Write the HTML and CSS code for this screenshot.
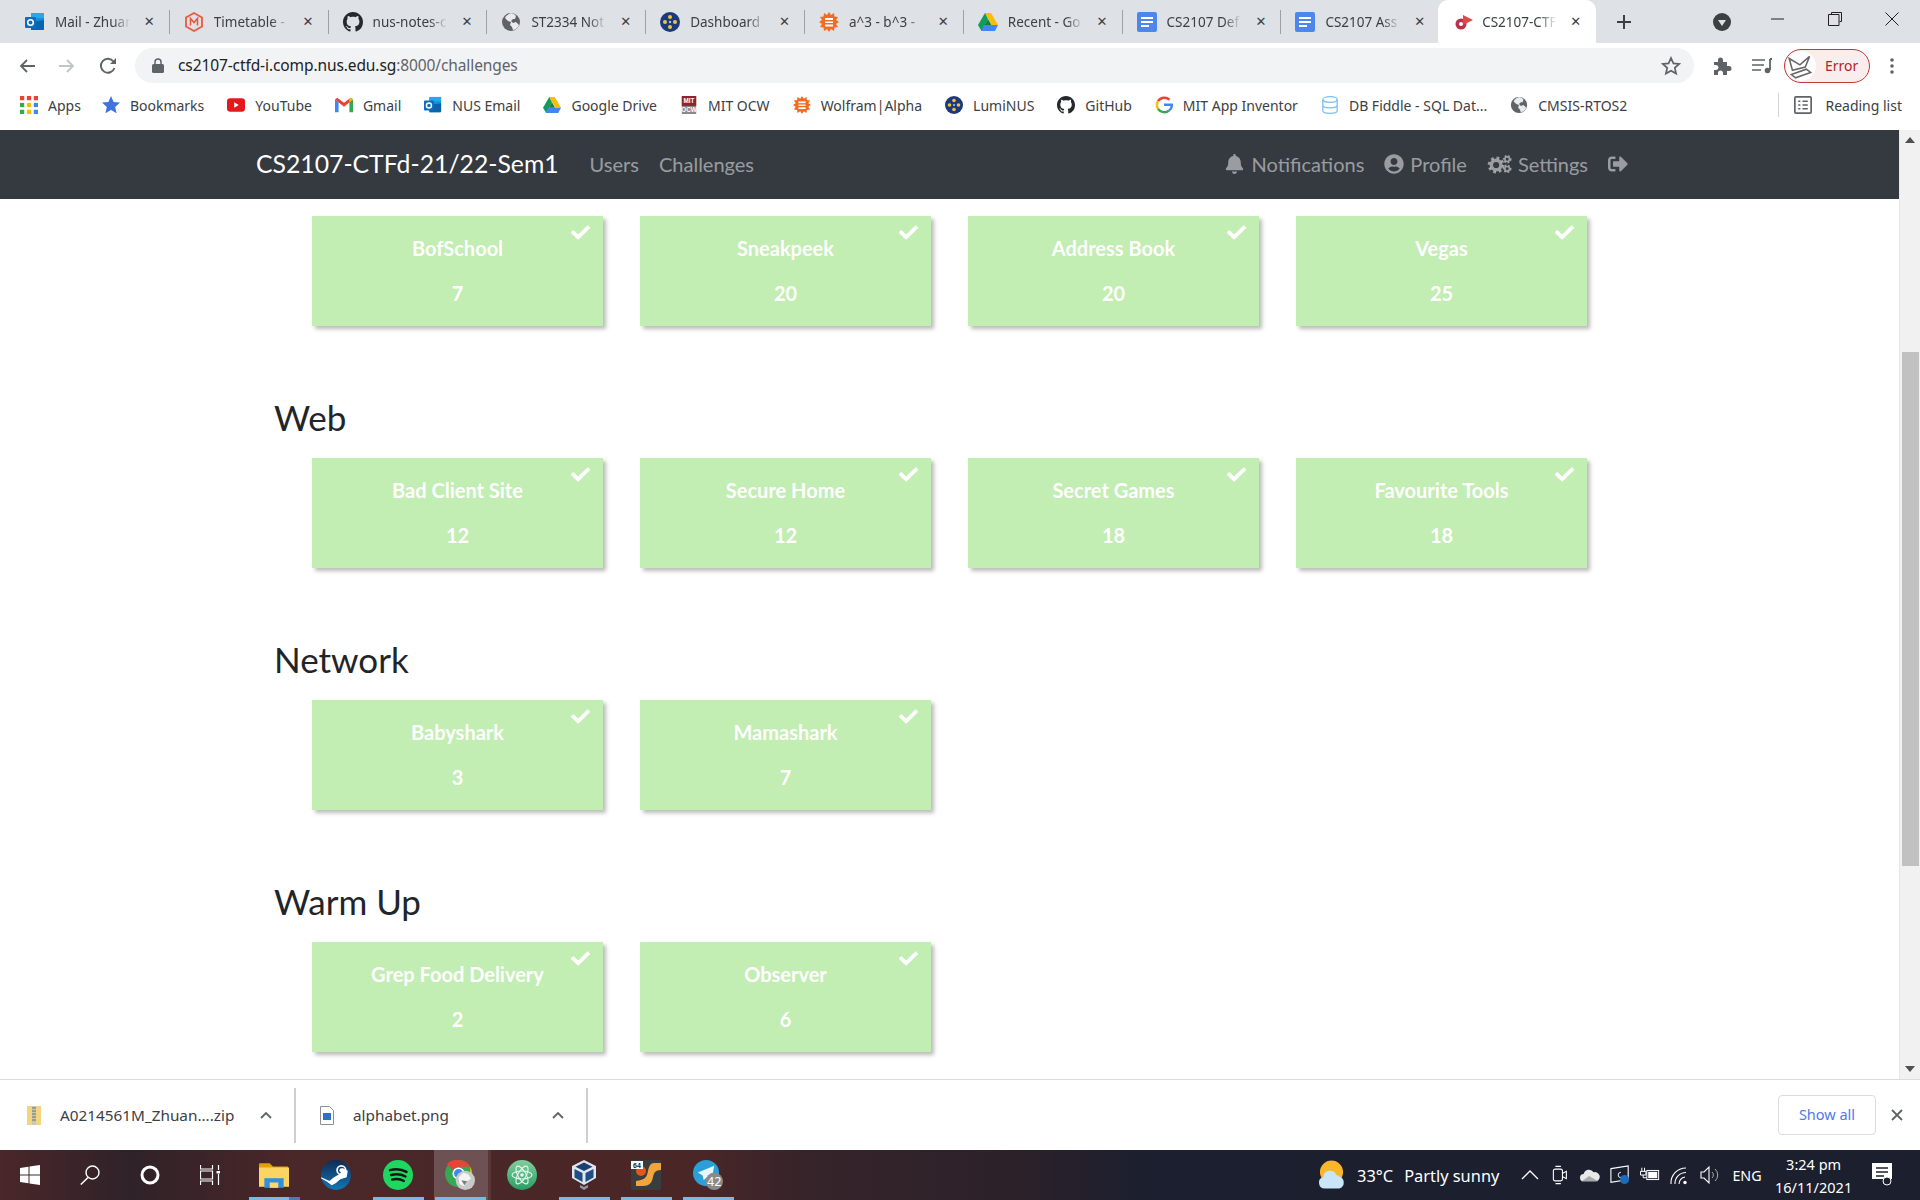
FILE: index.html
```html
<!DOCTYPE html>
<html lang="en">
<head>
    <meta charset="UTF-8">
    <title>CS2107-CTFd-21/22-Sem1</title>
    <link rel="stylesheet" href="styles.css">
</head>
<body>
    <svg class="defs" width="0" height="0">
        <defs>
            <symbol id="i-github" viewBox="0 0 16 16"><path fill="#24292e" d="M8 0C3.58 0 0 3.58 0 8c0 3.54 2.29 6.53 5.47 7.59.4.07.55-.17.55-.38 0-.19-.01-.82-.01-1.49-2.01.37-2.53-.49-2.69-.94-.09-.23-.48-.94-.82-1.13-.28-.15-.68-.52-.01-.53.63-.01 1.08.58 1.23.82.72 1.21 1.87.87 2.33.66.07-.52.28-.87.51-1.07-1.78-.2-3.64-.89-3.64-3.95 0-.87.31-1.59.82-2.15-.08-.2-.36-1.02.08-2.12 0 0 .67-.21 2.2.82.64-.18 1.32-.27 2-.27.68 0 1.36.09 2 .27 1.53-1.04 2.2-.82 2.2-.82.44 1.1.16 1.92.08 2.12.51.56.82 1.27.82 2.15 0 3.07-1.87 3.75-3.65 3.95.29.25.54.73.54 1.48 0 1.07-.01 1.93-.01 2.2 0 .21.15.46.55.38A8.013 8.013 0 0016 8c0-4.42-3.58-8-8-8z"/></symbol>
            <symbol id="i-outlook" viewBox="0 0 20 20"><rect x="6" y="1" width="13" height="17" rx="1" fill="#1490df"/><rect x="6" y="1" width="13" height="5" fill="#28a8ea"/><path d="M6 10l13-2v9a1 1 0 0 1-1 1H6z" fill="#0a64ad"/><rect x="0" y="5" width="11" height="11" rx="1" fill="#0f6cbd"/><circle cx="5.5" cy="10.5" r="2.8" fill="none" stroke="#fff" stroke-width="1.6"/></symbol>
            <symbol id="i-globe" viewBox="0 0 20 20"><circle cx="10" cy="10" r="9" fill="#5f6368"/><path d="M10 1c-2 1-5 2-6 5l3 3 3 1-1 3 2 2 1 3c3-.5 5-2 6-5l-3-3-3 1-2-2 2-2 2 0 1-3-2-2z" fill="#e8eaed"/></symbol>
            <symbol id="i-lumi" viewBox="0 0 20 20"><circle cx="10" cy="10" r="10" fill="#1b3a7d"/><circle cx="10" cy="5" r="2" fill="#f0c33c"/><circle cx="5" cy="10" r="2" fill="#f0c33c"/><circle cx="15" cy="10" r="2" fill="#f0c33c"/><circle cx="10" cy="15" r="2" fill="#f0c33c"/><circle cx="10" cy="10" r="1.2" fill="#9fc1ee"/></symbol>
            <symbol id="i-wolfram" viewBox="0 0 20 20"><path fill="#f26b21" d="M10 0l2 3 3-2 .5 3.5 3.5.5-2 3 3 2-3 2 2 3-3.5.5L15 19l-3-2-2 3-2-3-3 2-.5-3.5L1 15l2-3-3-2 3-2-2-3 3.5-.5L5 1l3 2z"/><rect x="6" y="6" width="8" height="2" fill="#fff"/><rect x="6" y="9.5" width="8" height="1.5" fill="#fff"/><rect x="6" y="12.5" width="8" height="2" fill="#fff"/></symbol>
            <symbol id="i-doc" viewBox="0 0 20 20"><rect x="0" width="20" height="20" rx="2" fill="#4f86ec"/><rect x="4" y="5" width="12" height="2" fill="#fff"/><rect x="4" y="9" width="12" height="2" fill="#fff"/><rect x="4" y="13" width="8" height="2" fill="#fff"/></symbol>
            <symbol id="i-drive" viewBox="0 0 20 18"><path d="M7 0h6l7 12h-6z" fill="#fbbc04"/><path d="M7 0l3 6-6.5 12L0 12z" fill="#0f9d58"/><path d="M6 12h14l-3 6H3z" fill="#4285f4"/><path d="M10 6l3.5 6H6.5z" fill="#188038"/></symbol>
            <symbol id="i-check" viewBox="0 0 512 512"><path fill="#fff" d="M173.898 439.404l-166.4-166.4c-9.997-9.997-9.997-26.206 0-36.204l36.203-36.204c9.997-9.998 26.207-9.998 36.204 0L192 312.69 432.095 72.596c9.997-9.997 26.207-9.997 36.204 0l36.203 36.204c9.997 9.997 9.997 26.206 0 36.204l-294.4 294.401c-9.998 9.997-26.207 9.997-36.204-.001z"/></symbol>
            <symbol id="i-chev" viewBox="0 0 12 8"><path d="M1 7l5-5 5 5" fill="none" stroke="#5f6368" stroke-width="1.8"/></symbol>
        </defs>
    </svg>

    <div class="tabstrip">
        <div class="tab">
            <svg class="favicon"><use href="#i-outlook"/></svg>
            <span class="tab-title">Mail - Zhuan</span>
            <span class="tab-x">✕</span>
        </div>
        <div class="tab">
            <svg class="favicon" viewBox="0 0 20 20"><path d="M10 1l8 4.5v9L10 19l-8-4.500v-9z" fill="none" stroke="#ea5a3e" stroke-width="1.8"/><path d="M6.500 13.500v-7l3.500 4 3.500-4v7" fill="none" stroke="#ea5a3e" stroke-width="1.6"/></svg>
            <span class="tab-title">Timetable -</span>
            <span class="tab-x">✕</span>
        </div>
        <div class="tab">
            <svg class="favicon"><use href="#i-github"/></svg>
            <span class="tab-title">nus-notes-c</span>
            <span class="tab-x">✕</span>
        </div>
        <div class="tab">
            <svg class="favicon"><use href="#i-globe"/></svg>
            <span class="tab-title">ST2334 Not</span>
            <span class="tab-x">✕</span>
        </div>
        <div class="tab">
            <svg class="favicon"><use href="#i-lumi"/></svg>
            <span class="tab-title">Dashboard</span>
            <span class="tab-x">✕</span>
        </div>
        <div class="tab">
            <svg class="favicon"><use href="#i-wolfram"/></svg>
            <span class="tab-title">a^3 - b^3 -</span>
            <span class="tab-x">✕</span>
        </div>
        <div class="tab">
            <svg class="favicon"><use href="#i-drive"/></svg>
            <span class="tab-title">Recent - Go</span>
            <span class="tab-x">✕</span>
        </div>
        <div class="tab">
            <svg class="favicon"><use href="#i-doc"/></svg>
            <span class="tab-title">CS2107 Def</span>
            <span class="tab-x">✕</span>
        </div>
        <div class="tab">
            <svg class="favicon"><use href="#i-doc"/></svg>
            <span class="tab-title">CS2107 Ass</span>
            <span class="tab-x">✕</span>
        </div>
        <div class="tab tab-active">
            <svg class="favicon" viewBox="0 0 20 20"><circle cx="7" cy="12" r="5.5" fill="#b8324a"/><circle cx="7" cy="12" r="2" fill="#fff"/><path d="M9 3l10 5-10 5z" fill="#e04848"/></svg>
            <span class="tab-title">CS2107-CTF</span>
            <span class="tab-x">✕</span>
        </div>
        <svg class="newtab" viewBox="0 0 14 14"><path d="M7 0v14M0 7h14" stroke="#3c4043" stroke-width="2"/></svg>
        <svg class="tabsearch" viewBox="0 0 18 18"><circle cx="9" cy="9" r="9" fill="#3c4043"/><path d="M5 7h8l-4 6z" fill="#dee1e6"/></svg>
        <div class="winctl">
            <svg width="14" height="14" viewBox="0 0 14 14"><path d="M0 7h13" stroke="#202124" stroke-width="1"/></svg>
            <svg width="14" height="14" viewBox="0 0 14 14"><path d="M3.500 2.500V.5h10v9h-2M.5 2.500h10.500v11H.5z" fill="none" stroke="#202124"/></svg>
            <svg width="14" height="14" viewBox="0 0 14 14"><path d="M.5.5l13 13M13.500.5l-13 13" stroke="#202124"/></svg>
        </div>
    </div>

    <div class="toolbar">
        <svg class="nav-ic" viewBox="0 0 16 16"><path d="M16 8H2M8 2L2 8l6 6" fill="none" stroke="#5f6368" stroke-width="1.8"/></svg>
        <svg class="nav-ic" viewBox="0 0 16 16"><path d="M0 8h14M8 2l6 6-6 6" fill="none" stroke="#c1c4c8" stroke-width="1.8"/></svg>
        <svg class="nav-ic" viewBox="0 0 18 18"><path d="M15.500 11a7 7 0 1 1-1-6.500" fill="none" stroke="#5f6368" stroke-width="1.9"/><path d="M17 1v6h-6z" fill="#5f6368"/></svg>
        <div class="omnibox">
            <svg class="lock" viewBox="0 0 12 15"><path d="M3 6V4a3 3 0 0 1 6 0v2" fill="none" stroke="#5f6368" stroke-width="1.5"/><rect y="6" width="12" height="9" rx="1.5" fill="#5f6368"/></svg>
            <span class="url"><span class="url-host">cs2107-ctfd-i.comp.nus.edu.sg</span>:8000/challenges</span>
            <svg class="star" viewBox="0 0 20 20"><path d="M10 2l2.400 5.400 5.800.6-4.400 3.900 1.300 5.700L10 14.700l-5.100 2.900 1.300-5.700L1.800 8l5.800-.6z" fill="none" stroke="#5f6368" stroke-width="1.7"/></svg>
        </div>
        <svg class="puzzle" viewBox="0 0 20 20"><path d="M2 6h4V4a2.500 2.500 0 0 1 5 0v2h4v4h2a2.500 2.500 0 0 1 0 5h-2v4h-4v-2a2.500 2.500 0 0 0-5 0v2H2v-5h2a2.500 2.500 0 0 0 0-5H2z" fill="#5f6368"/></svg>
        <svg class="media" viewBox="0 0 20 16"><path d="M0 2h13M0 7h12M0 12h9" stroke="#5f6368" stroke-width="1.7"/><path d="M18 1v11M18 1h2" stroke="#5f6368" stroke-width="1.8"/><circle cx="15.500" cy="12.500" r="2.8" fill="#5f6368"/></svg>
        <div class="err-pill">
            <svg class="avatar" viewBox="0 0 28 28"><circle cx="14" cy="14" r="14" fill="#fff"/><path d="M3 7l10 6 9-8-4 10-12 3zM5 22l14-5 4 3-14 5z" fill="none" stroke="#666" stroke-width="1.4"/></svg>
            <span>Error</span>
        </div>
        <svg class="dots" viewBox="0 0 4 16"><circle cx="2" cy="2" r="1.8" fill="#5f6368"/><circle cx="2" cy="8" r="1.8" fill="#5f6368"/><circle cx="2" cy="14" r="1.8" fill="#5f6368"/></svg>
    </div>

    <div class="bookmarks">
        <div class="bm bm-apps">
            <svg class="bm-ic" viewBox="0 0 17 17"><rect width="4" height="4" fill="#ea4335"/><rect x="6.5" width="4" height="4" fill="#ea4335"/><rect x="13" width="4" height="4" fill="#ea4335"/><rect y="6.5" width="4" height="4" fill="#34a853"/><rect x="6.5" y="6.5" width="4" height="4" fill="#fbbc04"/><rect x="13" y="6.5" width="4" height="4" fill="#4285f4"/><rect y="13" width="4" height="4" fill="#34a853"/><rect x="6.5" y="13" width="4" height="4" fill="#fbbc04"/><rect x="13" y="13" width="4" height="4" fill="#4285f4"/></svg>
            <span>Apps</span>
        </div>
        <div class="bm">
            <svg class="bm-ic" viewBox="0 0 18 18"><path d="M9 0l2.600 6 6.400.6-4.800 4.300 1.400 6.300L9 13.900l-5.600 3.300 1.400-6.300L0 6.600 6.400 6z" fill="#3f74e0"/></svg>
            <span>Bookmarks</span>
        </div>
        <div class="bm">
            <svg class="bm-ic" viewBox="0 0 20 15"><rect width="20" height="15" rx="3.5" fill="#e3191b"/><path d="M8 4.500l5 3-5 3z" fill="#fff"/></svg>
            <span>YouTube</span>
        </div>
        <div class="bm">
            <svg class="bm-ic" viewBox="0 0 20 16"><path d="M0 2v14h4V5z" fill="#4285f4"/><path d="M20 2v14h-4V5z" fill="#34a853"/><path d="M0 2l10 8 10-8-2.500-2L10 5.500 2.500 0z" fill="#ea4335"/><path d="M17.500 0L20 2l-4 3V1z" fill="#fbbc04"/></svg>
            <span>Gmail</span>
        </div>
        <div class="bm">
            <svg class="bm-ic"><use href="#i-outlook"/></svg>
            <span>NUS Email</span>
        </div>
        <div class="bm">
            <svg class="bm-ic"><use href="#i-drive"/></svg>
            <span>Google Drive</span>
        </div>
        <div class="bm">
            <svg class="bm-ic" viewBox="0 0 16 20"><rect width="16" height="20" fill="#8a8a8a"/><rect width="16" height="11" fill="#8a2531"/><text x="8" y="8" class="mit-a">MIT</text><text x="8" y="17.5" class="mit-b">OCW</text></svg>
            <span>MIT OCW</span>
        </div>
        <div class="bm">
            <svg class="bm-ic"><use href="#i-wolfram"/></svg>
            <span>Wolfram|Alpha</span>
        </div>
        <div class="bm">
            <svg class="bm-ic"><use href="#i-lumi"/></svg>
            <span>LumiNUS</span>
        </div>
        <div class="bm">
            <svg class="bm-ic"><use href="#i-github"/></svg>
            <span>GitHub</span>
        </div>
        <div class="bm">
            <svg class="bm-ic" viewBox="0 0 18 18"><path d="M14.500 3.700A7.600 7.600 0 0 0 3 5.200" fill="none" stroke="#ea4335" stroke-width="2.4"/><path d="M3 5.200a7.600 7.600 0 0 0 0 7.600" fill="none" stroke="#fbbc04" stroke-width="2.4"/><path d="M3 12.800a7.600 7.600 0 0 0 11 1.800" fill="none" stroke="#34a853" stroke-width="2.4"/><path d="M9 8.800h7.800c.2 2.400-.8 4.400-2.800 5.800" fill="none" stroke="#4285f4" stroke-width="2.4"/></svg>
            <span>MIT App Inventor</span>
        </div>
        <div class="bm">
            <svg class="bm-ic" viewBox="0 0 18 20"><ellipse cx="9" cy="4" rx="8" ry="3.2" fill="none" stroke="#7cc0ef" stroke-width="1.4"/><path d="M1 4v12c0 1.800 3.600 3.200 8 3.200s8-1.400 8-3.200V4M1 10c0 1.800 3.600 3.200 8 3.200s8-1.400 8-3.200" fill="none" stroke="#7cc0ef" stroke-width="1.4"/></svg>
            <span>DB Fiddle - SQL Dat...</span>
        </div>
        <div class="bm">
            <svg class="bm-ic"><use href="#i-globe"/></svg>
            <span>CMSIS-RTOS2</span>
        </div>
        <div class="reading">
            <svg class="bm-ic" viewBox="0 0 17 17"><rect x=".8" y=".8" width="15.4" height="15.4" rx="1" fill="none" stroke="#5f6368" stroke-width="1.6"/><path d="M4 5h2M4 8.500h2M4 12h2M8 5h5M8 8.500h5M8 12h5" stroke="#5f6368" stroke-width="1.5"/></svg>
            <span>Reading list</span>
        </div>
    </div>

    <div class="viewport">
        <div class="page">
            <nav class="navbar">
                <a class="brand">CS2107-CTFd-21/22-Sem1</a>
                <a class="nav-link">Users</a>
                <a class="nav-link">Challenges</a>
                <div class="nav-right">
                    <a class="nav-link"><svg class="fa fa-bell" viewBox="0 0 448 512"><path d="M224 512c35.320 0 63.970-28.650 63.970-64H160.030c0 35.350 28.650 64 63.970 64zm215.390-149.710c-19.320-20.760-55.470-51.990-55.470-154.290 0-77.700-54.480-139.900-127.940-155.160V32c0-17.670-14.320-32-31.980-32s-31.980 14.330-31.980 32v20.840C118.560 68.100 64.080 130.300 64.080 208c0 102.300-36.150 133.530-55.470 154.290-6 6.450-8.660 14.160-8.610 21.710.11 16.400 12.980 32 32.100 32h383.800c19.120 0 32-15.600 32.100-32 .05-7.550-2.610-15.270-8.610-21.710z"/></svg>Notifications</a>
                    <a class="nav-link"><svg class="fa fa-user" viewBox="0 0 496 512"><path d="M248 8C111 8 0 119 0 256s111 248 248 248 248-111 248-248S385 8 248 8zm0 96c48.600 0 88 39.400 88 88s-39.400 88-88 88-88-39.400-88-88 39.400-88 88-88zm0 344c-58.700 0-111.300-26.600-146.500-68.200 18.800-35.400 55.600-59.800 98.500-59.800 2.400 0 4.800.4 7.100 1.100 13 4.200 26.600 6.900 40.900 6.900 14.300 0 28-2.700 40.900-6.900 2.300-.7 4.700-1.100 7.100-1.100 42.900 0 79.700 24.400 98.500 59.800C359.300 421.400 306.700 448 248 448z"/></svg>Profile</a>
                    <a class="nav-link"><svg class="fa fa-cogs" viewBox="0 0 26 20"><circle cx="9.5" cy="11" r="5" fill="none" stroke="currentColor" stroke-width="3.6"/><circle cx="9.5" cy="11" r="7.6" fill="none" stroke="currentColor" stroke-width="2.4" stroke-dasharray="3 3"/><circle cx="21" cy="5" r="2.4" fill="none" stroke="currentColor" stroke-width="1.8"/><circle cx="21" cy="5" r="3.8" fill="none" stroke="currentColor" stroke-width="1.4" stroke-dasharray="1.8 1.9"/><circle cx="21" cy="15" r="2.4" fill="none" stroke="currentColor" stroke-width="1.8"/><circle cx="21" cy="15" r="3.8" fill="none" stroke="currentColor" stroke-width="1.4" stroke-dasharray="1.8 1.9"/></svg>Settings</a>
                    <a class="nav-link nav-last"><svg class="fa fa-out" viewBox="0 0 512 512"><path d="M497 273L329 441c-15 15-41 4.500-41-17v-96H152c-13.300 0-24-10.700-24-24v-96c0-13.300 10.700-24 24-24h136V88c0-21.400 25.900-32 41-17l168 168c9.300 9.400 9.300 24.600 0 34zM192 436v-40c0-6.600-5.400-12-12-12H96c-17.700 0-32-14.300-32-32V160c0-17.700 14.300-32 32-32h84c6.600 0 12-5.400 12-12V76c0-6.600-5.400-12-12-12H96c-53 0-96 43-96 96v192c0 53 43 96 96 96h84c6.600 0 12-5.400 12-12z"/></svg></a>
                </div>
            </nav>

            <main class="challenges">
                <section class="group">
                    <div class="cards">
                        <div class="card"><svg class="tick"><use href="#i-check"/></svg><span>BofSchool</span><span>7</span></div>
                        <div class="card"><svg class="tick"><use href="#i-check"/></svg><span>Sneakpeek</span><span>20</span></div>
                        <div class="card"><svg class="tick"><use href="#i-check"/></svg><span>Address Book</span><span>20</span></div>
                        <div class="card"><svg class="tick"><use href="#i-check"/></svg><span>Vegas</span><span>25</span></div>
                    </div>
                </section>
                <section class="group">
                    <h3 class="cat">Web</h3>
                    <div class="cards">
                        <div class="card"><svg class="tick"><use href="#i-check"/></svg><span>Bad Client Site</span><span>12</span></div>
                        <div class="card"><svg class="tick"><use href="#i-check"/></svg><span>Secure Home</span><span>12</span></div>
                        <div class="card"><svg class="tick"><use href="#i-check"/></svg><span>Secret Games</span><span>18</span></div>
                        <div class="card"><svg class="tick"><use href="#i-check"/></svg><span>Favourite Tools</span><span>18</span></div>
                    </div>
                </section>
                <section class="group">
                    <h3 class="cat">Network</h3>
                    <div class="cards">
                        <div class="card"><svg class="tick"><use href="#i-check"/></svg><span>Babyshark</span><span>3</span></div>
                        <div class="card"><svg class="tick"><use href="#i-check"/></svg><span>Mamashark</span><span>7</span></div>
                    </div>
                </section>
                <section class="group">
                    <h3 class="cat">Warm Up</h3>
                    <div class="cards">
                        <div class="card"><svg class="tick"><use href="#i-check"/></svg><span>Grep Food Delivery</span><span>2</span></div>
                        <div class="card"><svg class="tick"><use href="#i-check"/></svg><span>Observer</span><span>6</span></div>
                    </div>
                </section>
            </main>
        </div>
        <div class="scrollbar">
            <div class="sb-up"></div>
            <div class="sb-thumb"></div>
            <div class="sb-down"></div>
        </div>
    </div>

    <div class="downloads">
        <div class="dl dl-zip">
            <svg class="dl-ic" viewBox="0 0 14 19"><rect width="14" height="19" fill="#f2d57e"/><rect x="5" width="4" height="19" fill="#c9c9b8"/><path d="M5 2h4M5 5h4M5 8h4M5 11h4M5 14h4" stroke="#6f6f5e"/></svg>
            <span class="dl-name">A0214561M_Zhuan....zip</span>
            <svg class="dl-chev"><use href="#i-chev"/></svg>
        </div>
        <div class="dl dl-png">
            <svg class="dl-ic" viewBox="0 0 14 19"><path d="M.5.5h9l4 4v14H.5z" fill="#fff" stroke="#8a8f98"/><rect x="3" y="7" width="8" height="7" fill="#2f6fc4"/></svg>
            <span class="dl-name">alphabet.png</span>
            <svg class="dl-chev"><use href="#i-chev"/></svg>
        </div>
        <button class="show-all">Show all</button>
        <svg class="dl-close" viewBox="0 0 12 12"><path d="M1 1l10 10M11 1L1 11" stroke="#5f6368" stroke-width="1.8"/></svg>
    </div>

    <footer class="taskbar">
        <div class="tb-sys">
            <svg class="tb-ic" viewBox="0 0 20 20"><path d="M0 3l8.500-1.200v7.700H0zM9.500 1.600L20 0v9.500H9.500zM0 10.500h8.500v7.700L0 17zM9.500 10.500H20V20L9.500 18.400z" fill="#fff"/></svg>
            <svg class="tb-ic" viewBox="0 0 20 20"><circle cx="12.5" cy="7.5" r="6.5" fill="none" stroke="#fff" stroke-width="1.4"/><path d="M8 12.500L.8 19.500" stroke="#fff" stroke-width="1.5"/></svg>
            <svg class="tb-ic" viewBox="0 0 20 20"><circle cx="10" cy="10" r="8" fill="none" stroke="#fff" stroke-width="3"/></svg>
            <svg class="tb-ic" viewBox="0 0 20 20"><path d="M.5 0v4h12V0M.5 20v-4h12v4M.5 6h12v8H.5zM18.500 0v5M18.500 9v11" fill="none" stroke="#fff" stroke-width="1.2"/><rect x="16.5" y="6" width="3.5" height="2.5" fill="#fff"/></svg>
        </div>
        <div class="tb-apps">
            <div class="tb-app tb-open tb-stack">
                <svg class="app-ic" viewBox="0 0 28 24"><path d="M0 2a1 1 0 0 1 1-1h9l3 3h14v3H0z" fill="#e3a008"/><path d="M0 5h28v18H0z" fill="#fcd462"/><path d="M5 15h18v9H5z" fill="#2f8fe0"/><path d="M10 19h8v5h-8z" fill="#ffd766"/></svg>
            </div>
            <div class="tb-app">
                <svg class="app-ic" viewBox="0 0 28 28"><defs><linearGradient id="steam-g" x1="0" y1="0" x2="0" y2="1"><stop offset="0" stop-color="#0f2b55"/><stop offset="1" stop-color="#1177b5"/></linearGradient></defs><circle cx="14" cy="14" r="14" fill="url(#steam-g)"/><path d="M0 16l8 3.500 3.500-3 6.500-4 2-5 5 2.500-1 6-6 2-4 3.500-4 2-4-3L0 17z" fill="#fff"/><circle cx="19" cy="9.5" r="4" fill="none" stroke="#fff" stroke-width="1.6"/><circle cx="19" cy="9.5" r="1.8" fill="#fff"/></svg>
            </div>
            <div class="tb-app tb-open">
                <svg class="app-ic" viewBox="0 0 28 28"><circle cx="14" cy="14" r="14" fill="#1ed760"/><path d="M6.500 9.500c5-1.400 11-1 15.500 1.600M7.500 14c4.500-1.200 9.500-.8 13.500 1.400M8.500 18.300c3.800-.9 7.800-.6 11 1.300" fill="none" stroke="#191414" stroke-width="2.2" stroke-linecap="round"/></svg>
            </div>
            <div class="tb-app tb-open tb-active">
                <svg class="app-ic" viewBox="0 0 31 31"><circle cx="14" cy="14" r="14" fill="#34a853"/><path d="M14 0a14 14 0 0 1 12.100 7H14a7 7 0 0 0-6.100 3.500L2 4.200A14 14 0 0 1 14 0z" fill="#ea4335"/><path d="M26.100 7A14 14 0 0 1 20 26l-6-9h12" fill="#fbbc04"/><circle cx="14" cy="14" r="5.5" fill="#4285f4" stroke="#fff" stroke-width="1.6"/><circle cx="21" cy="21" r="10" fill="#c9c9c9"/><path d="M14 18l5-5 5 2 3 4-4 3-3 5-5-2z" fill="#f4f4f4"/><path d="M17 21l6 1-3 4z" fill="#7d7d7d"/></svg>
            </div>
            <div class="tb-app">
                <svg class="app-ic" viewBox="0 0 30 30"><defs><linearGradient id="atom-g" x1="0" y1="0" x2="0" y2="1"><stop offset="0" stop-color="#7fcf9c"/><stop offset="1" stop-color="#2a9d64"/></linearGradient></defs><circle cx="15" cy="15" r="15" fill="url(#atom-g)"/><g fill="none" stroke="#e9f7ee" stroke-width="1.1"><ellipse cx="15" cy="15" rx="10" ry="4"/><ellipse cx="15" cy="15" rx="10" ry="4" transform="rotate(60 15 15)"/><ellipse cx="15" cy="15" rx="10" ry="4" transform="rotate(120 15 15)"/></g><circle cx="15" cy="15" r="1.8" fill="#e9f7ee"/></svg>
            </div>
            <div class="tb-app tb-open">
                <svg class="app-ic" viewBox="0 0 26 30"><path d="M13 0l12 6v12l-12 7-12-7V6z" fill="#dfe6ee"/><path d="M13 2.500l8.500 4.200L13 11 4.500 6.700z" fill="#1c3f72"/><path d="M3.500 9l8 4v9l-8-4.500zM22.500 9l-8 4v9l8-4.500z" fill="#1f4d85"/><path d="M9 25l4 2 4-2v2.500L13 30l-4-2.500z" fill="#8d99a8"/></svg>
            </div>
            <div class="tb-app tb-open">
                <svg class="app-ic" viewBox="0 0 30 30"><rect width="30" height="30" rx="1" fill="#3a3d40"/><path d="M30 3h-7c-4 0-5 4-6 8-1 6-3 9-12 10v5h7c6 0 9-3 10-9 1-4 2-7 8-7z" fill="#f0a63c"/><circle cx="10" cy="11" r="5" fill="#e4561a"/><rect y="1" width="12" height="8" fill="#fff"/><text x="6" y="8" class="app-64">64</text></svg>
            </div>
            <div class="tb-app tb-open">
                <svg class="app-ic" viewBox="0 0 31 31"><circle cx="13.5" cy="13.5" r="13.5" fill="#2a9fd8"/><path d="M5 13l17-7-3 15-5-3-3 3-1-5z" fill="#e8f5fb"/><circle cx="22" cy="22" r="9" fill="#8a8a8a"/><text x="22" y="27" class="app-42">42</text></svg>
            </div>
        </div>
        <div class="tb-tray">
            <svg class="weather" viewBox="0 0 28 30"><circle cx="14" cy="12" r="12" fill="#f8b62b"/><path d="M7 29a6 6 0 0 1-1.500-11.800A7 7 0 0 1 19 15a5 5 0 0 1 3 1.500A6.500 6.500 0 0 1 22 29z" fill="#c8e6f8"/></svg>
            <span class="temp">33°C</span>
            <span class="forecast">Partly sunny</span>
            <svg class="tray-ic tray-chev" viewBox="0 0 18 10"><path d="M1 9l8-8 8 8" fill="none" stroke="#fff" stroke-width="1.3"/></svg>
            <svg class="tray-ic" viewBox="0 0 16 22"><rect x=".7" y="4.5" width="10" height="13" rx="2" fill="none" stroke="#fff" stroke-width="1.2"/><path d="M11 9l4-2v8l-4-2M3 1.500h6M3 20.500h6" fill="none" stroke="#fff" stroke-width="1.2"/></svg>
            <svg class="tray-ic" viewBox="0 0 22 16"><path d="M4 15a4 4 0 0 1 0-8 6 6 0 0 1 11-2 5 5 0 0 1 3 10z" fill="#e8e8e8"/><path d="M2 15l8-6 10 6z" fill="#a9a9ad"/></svg>
            <svg class="tray-ic" viewBox="0 0 22 22"><path d="M1 4l19-3v15l-19 3z" fill="none" stroke="#fff" stroke-width="1.2"/><path d="M12 8a3 3 0 1 0 0 6" fill="none" stroke="#fff"/><circle cx="16" cy="16" r="5" fill="#1e6bb8"/></svg>
            <svg class="tray-ic" viewBox="0 0 22 16"><path d="M2 0v4M5 0v4M.5 4h6v4H.5zM3.500 8v3H7" fill="none" stroke="#fff" stroke-width="1.1"/><rect x="7.5" y="3" width="13" height="10" fill="none" stroke="#fff" stroke-width="1.1"/><rect x="9" y="4.5" width="10" height="7" fill="#fff"/></svg>
            <svg class="tray-ic" viewBox="0 0 20 20"><path d="M1 19A15 15 0 0 1 16 3M5 19A11 11 0 0 1 16 7.500M9 19a7 7 0 0 1 6-7" fill="none" stroke="#fff" stroke-width="1.1"/><circle cx="15" cy="17.5" r="1.7" fill="#fff"/></svg>
            <svg class="tray-ic" viewBox="0 0 20 20"><path d="M1 7h3l5-5v16l-5-5H1z" fill="none" stroke="#fff" stroke-width="1.1"/><path d="M12 7a4 4 0 0 1 0 6M15 4a8 8 0 0 1 0 12" fill="none" stroke="#aaa" stroke-width="1"/></svg>
            <span class="lang">ENG</span>
            <div class="clock"><span>3:24 pm</span><span>16/11/2021</span></div>
            <svg class="notif" viewBox="0 0 22 24"><path d="M0 0h20v16h-5l-4 5v-5H0z" fill="#fff"/><path d="M4 5h12M4 9h12M4 13h8" stroke="#1c1f2e" stroke-width="1.3"/><circle cx="15" cy="18" r="4" fill="#1c1f2e" stroke="#fff"/></svg>
        </div>
    </footer>
</body>
</html>
```

FILE: styles.css
```css
* {
    box-sizing: border-box;
}

html, body {
    margin: 0;
    height: 100%;
    overflow: hidden;
}

body {
    width: 1920px;
    height: 1200px;
    display: flex;
    flex-direction: column;
    font-family: "Noto Sans", "Open Sans", sans-serif;
    color: #3c4043;
    background: #fff;
}

.defs {
    position: absolute;
}

svg {
    display: block;
    flex: none;
}

/* tab strip */
.tabstrip {
    height: 43px;
    flex: none;
    display: flex;
    align-items: stretch;
    padding-left: 11px;
    background: #dee1e6;
}

.tab {
    width: 158.8px;
    display: flex;
    align-items: center;
    padding: 0 13px 0 14px;
    position: relative;
    font-size: 13.5px;
}

.tab::after {
    content: "";
    position: absolute;
    right: 0;
    top: 10px;
    height: 24px;
    width: 1px;
    background: #9da1a6;
}

.tab:nth-child(9)::after,
.tab-active::after {
    display: none;
}

.tab-active {
    width: 158px;
    margin-left: -2px;
    padding-left: 16px;
    background: #fff;
    border-radius: 10px 10px 0 0;
}

.favicon {
    width: 20px;
    height: 20px;
    margin-right: 10px;
}

.tab-active .favicon {
    margin-right: 8px;
}

.tab-title {
    flex: 1;
    min-width: 0;
    overflow: hidden;
    white-space: nowrap;
    -webkit-mask-image: linear-gradient(90deg, #000 70%, transparent 92%);
    mask-image: linear-gradient(90deg, #000 70%, transparent 92%);
}

.tab-x {
    width: 13px;
    margin-left: 7px;
    font-size: 13px;
    font-weight: 700;
    color: #3c4043;
    font-family: "DejaVu Sans", sans-serif;
}

.newtab {
    width: 14px;
    height: 14px;
    align-self: center;
    margin-left: 21px;
}

.tabsearch {
    width: 18px;
    height: 18px;
    align-self: center;
    margin-left: 82px;
}

.winctl {
    margin-left: 40px;
    display: flex;
    gap: 43px;
    padding-top: 12px;
}

/* toolbar */
.toolbar {
    height: 45px;
    flex: none;
    display: flex;
    align-items: center;
    padding-left: 19px;
    background: #fff;
}

.nav-ic {
    width: 16px;
    height: 16px;
    margin-right: 24px;
}

.nav-ic:nth-child(3) {
    width: 18px;
    height: 18px;
    margin-right: 18px;
}

.omnibox {
    width: 1559px;
    height: 35px;
    display: flex;
    align-items: center;
    padding: 0 13px 0 17px;
    border-radius: 18px;
    background: #f1f3f4;
}

.lock {
    width: 12px;
    height: 15px;
    margin-right: 14px;
}

.url {
    flex: 1;
    padding-bottom: 2px;
    font-size: 15.5px;
    letter-spacing: -0.1px;
    color: #5f6368;
    white-space: nowrap;
}

.url-host {
    color: #202124;
}

.star {
    width: 20px;
    height: 20px;
}

.puzzle {
    width: 20px;
    height: 20px;
    margin-left: 18px;
}

.media {
    width: 20px;
    height: 16px;
    margin-left: 20px;
}

.err-pill {
    width: 86px;
    height: 34px;
    margin-left: 12px;
    display: flex;
    align-items: center;
    gap: 9px;
    padding-left: 1px;
    border: 1px solid #c5383a;
    border-radius: 17px;
    background: #faeded;
    color: #b3261e;
    font-size: 14px;
}

.avatar {
    width: 30px;
    height: 30px;
}

.dots {
    width: 4px;
    height: 16px;
    margin-left: 20px;
}

/* bookmarks */
.bookmarks {
    height: 42px;
    flex: none;
    display: flex;
    align-items: center;
    padding: 0 0 8px 20px;
    background: #fff;
    font-size: 14px;
    color: #3c4043;
}

.bm {
    display: flex;
    align-items: center;
    gap: 10px;
    margin-right: 23px;
    white-space: nowrap;
}

.bm-apps {
    margin-right: 21px;
}

.bm-ic {
    width: 18px;
    height: 18px;
}

.reading {
    display: flex;
    align-items: center;
    gap: 13px;
    margin-left: auto;
    margin-right: 18px;
    padding-left: 15px;
    height: 24px;
    border-left: 1px solid #d0d2d5;
}

.mit-a,
.mit-b {
    font-family: "Liberation Sans", sans-serif;
    font-size: 7px;
    font-weight: 700;
    fill: #fff;
    text-anchor: middle;
}

/* page area */
.viewport {
    height: 949px;
    flex: none;
    display: flex;
    overflow: hidden;
}

.page {
    flex: 1;
    font-family: Lato, sans-serif;
}

.navbar {
    height: 69px;
    display: flex;
    align-items: center;
    padding: 0 251px 2px 256px;
    background: #343a40;
}

.brand {
    font-size: 24.75px;
    color: #fff;
    margin-right: 31px;
}

.nav-link {
    display: flex;
    align-items: center;
    font-size: 20px;
    color: rgba(255, 255, 255, 0.5);
    margin-right: 20px;
}

.nav-right {
    display: flex;
    margin-left: auto;
}

.nav-last {
    margin-right: 20px;
}

.fa {
    fill: currentColor;
    height: 20px;
    margin-right: 6px;
}

.fa-bell {
    width: 19px;
    margin-right: 8px;
}

.fa-user {
    width: 20px;
    margin-right: 6px;
}

.fa-cogs {
    width: 25px;
    margin-right: 6px;
}

.fa-out {
    width: 20px;
    margin-right: 0;
}

.challenges {
    padding: 17px 0 0 274px;
}

.group {
    margin-bottom: 72px;
}

.cat {
    height: 40px;
    margin: 0 0 20px;
    padding-bottom: 2px;
    font-size: 35px;
    font-weight: 400;
    line-height: 38px;
    color: #212529;
}

.cards {
    display: grid;
    grid-template-columns: repeat(4, 291px);
    column-gap: 37px;
    padding-left: 38px;
}

.card {
    height: 110px;
    position: relative;
    display: flex;
    flex-direction: column;
    align-items: center;
    gap: 21px;
    padding-top: 20px;
    background: #c2edb3;
    box-shadow: 3px 3px 4px rgba(0, 0, 0, 0.27);
    color: #fff;
    font-size: 20px;
    font-weight: 700;
    line-height: 24px;
}

.tick {
    position: absolute;
    top: 7px;
    right: 13px;
    width: 19px;
    height: 19px;
}

.scrollbar {
    width: 21px;
    flex: none;
    display: flex;
    flex-direction: column;
    align-items: center;
    position: relative;
    background: #f1f1f1;
    border-left: 1px solid #e8e8e8;
}

.sb-up,
.sb-down {
    width: 0;
    height: 0;
    border-left: 5px solid transparent;
    border-right: 5px solid transparent;
}

.sb-up {
    margin-top: 7px;
    border-bottom: 6px solid #505050;
}

.sb-down {
    position: absolute;
    bottom: 7px;
    border-top: 6px solid #505050;
}

.sb-thumb {
    width: 17px;
    height: 514px;
    margin-top: 209px;
    background: #c1c1c1;
}

/* download shelf */
.downloads {
    height: 71px;
    flex: none;
    display: flex;
    align-items: center;
    border-top: 1px solid #dcdcdc;
    background: #fff;
    color: #3c4043;
    font-size: 15.3px;
}

.dl {
    height: 55px;
    display: flex;
    align-items: center;
    padding-left: 27px;
    border-right: 2px solid #cfcfcf;
}

.dl-zip {
    width: 296px;
}

.dl-png {
    width: 292px;
    padding-left: 24px;
}

.dl-ic {
    width: 14px;
    height: 19px;
}

.dl-name {
    margin-left: 19px;
    flex: 1;
    white-space: nowrap;
}

.dl-chev {
    width: 12px;
    height: 8px;
    margin-right: 22px;
}

.show-all {
    width: 98px;
    height: 40px;
    margin-left: auto;
    background: #fff;
    border: 1px solid #dadce0;
    border-radius: 4px;
    color: #4f79e8;
    font-family: "Noto Sans", sans-serif;
    font-size: 14.5px;
    padding: 0 0 3px;
}

.dl-close {
    width: 12px;
    height: 12px;
    margin: 0 17px 0 15px;
}

/* taskbar */
.taskbar {
    height: 50px;
    flex: none;
    display: flex;
    align-items: center;
    background: linear-gradient(90deg, #4a2729 0, #2f2229 130px, #4a2728 290px, #4a2627 700px, #36242a 800px, #2c2129 1020px, #1b1f2f 1150px, #1b1f2e 1920px);
    color: #fff;
}

.tb-sys {
    display: flex;
    width: 243px;
    flex: none;
}

.tb-ic {
    width: 20px;
    height: 20px;
    margin: 0 20px;
}

.tb-apps {
    display: flex;
    flex: none;
}

.tb-app {
    width: 62px;
    height: 50px;
    display: flex;
    align-items: center;
    justify-content: center;
    position: relative;
}

.tb-open::after {
    content: "";
    position: absolute;
    left: 6px;
    right: 5px;
    bottom: 0;
    height: 3px;
    background: #76b9ed;
}

/* more than one window open: darker end on the bar */
.tb-stack::after {
    background: linear-gradient(90deg, #76b9ed 78%, #4a7ea8 78%);
}

.tb-active {
    background: linear-gradient(90deg, transparent 0 5px, rgba(255, 255, 255, 0.2) 5px 59px, rgba(255, 255, 255, 0.08) 59px 62px);
}

.app-ic {
    width: 30px;
    height: 30px;
}

.app-64 {
    font-family: "Liberation Sans", sans-serif;
    font-size: 7px;
    font-weight: 700;
    fill: #222;
    text-anchor: middle;
}

.app-42 {
    font-family: "Noto Sans", sans-serif;
    font-size: 13px;
    fill: #fff;
    text-anchor: middle;
}

.tb-tray {
    flex: 1;
    display: flex;
    align-items: center;
    padding-left: 579px;
    font-size: 16.4px;
    white-space: nowrap;
}

.weather {
    width: 27px;
    height: 30px;
}

.temp {
    margin-left: 12px;
}

.forecast {
    margin-left: 11px;
    margin-right: 21px;
}

.temp,
.forecast {
    padding-top: 1px;
}

.tray-ic {
    width: 20px;
    height: 20px;
    margin-right: 10px;
}

.tray-chev {
    height: 10px;
}

.lang {
    margin-left: 2px;
    font-size: 14.3px;
}

.clock {
    width: 90px;
    margin-left: 7px;
    display: flex;
    flex-direction: column;
    align-items: center;
    gap: 3px;
    font-size: 14.5px;
    line-height: 20px;
}

.notif {
    width: 22px;
    height: 24px;
    margin-left: 13px;
}
```
